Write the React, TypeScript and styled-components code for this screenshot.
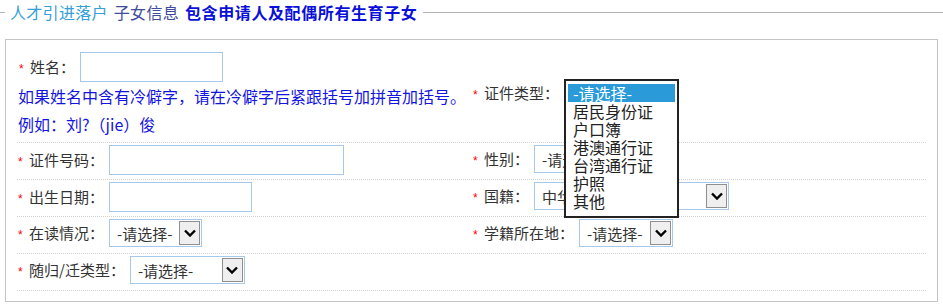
import styled, { createGlobalStyle } from 'styled-components'

const GlobalStyle = createGlobalStyle`
  html, body {
    margin: 0;
    padding: 0;
    background: #ffffff;
  }
  body {
    font-family: 'Noto Sans CJK SC', 'Liberation Sans', sans-serif;
    color: #333333;
  }
`

const Page = styled.div`
  width: 943px;
  height: 305px;
  overflow: hidden;
`

const Legend = styled.div`
  display: flex;
  align-items: center;
  height: 24px;
  font-size: 16px;
  line-height: 24px;
  white-space: nowrap;

  &::before,
  &::after {
    content: '';
    height: 1px;
    background: #b4b4b4;
  }

  &::before {
    width: 5px;
    margin-right: 5px;
  }

  &::after {
    flex: 1;
    margin-left: 6px;
  }
`

const LegendPart = styled.span<{ $tone: 'light' | 'slate' | 'strong' }>`
  color: ${(p) =>
    p.$tone === 'light' ? '#35a0d8' : p.$tone === 'slate' ? '#3e4c9c' : '#0a10d8'};
  font-weight: ${(p) => (p.$tone === 'strong' ? 'bold' : 'normal')};
  letter-spacing: ${(p) => (p.$tone === 'strong' ? '0.6px' : '0.3px')};
  margin-right: ${(p) => (p.$tone === 'strong' ? '0' : '6px')};
`

const Box = styled.div`
  margin: 15px 0 0 5px;
  width: 933px;
  height: 263px;
  box-sizing: border-box;
  border: 1px solid #c4c4c4;
  padding: 9px 11px 0 11px;
`

const Row = styled.div<{ $first?: boolean }>`
  display: grid;
  grid-template-columns: 455px 1fr;
  box-sizing: border-box;
  height: ${(p) => (p.$first ? '94px' : '37px')};
  padding-top: ${(p) => (p.$first ? '3px' : '2px')};
  border-bottom: 1px dotted #d2d2d2;
  align-items: start;
`

const Cell = styled.div<{ $center?: boolean }>`
  display: flex;
  align-items: center;
  align-self: ${(p) => (p.$center ? 'center' : 'start')};
  margin-bottom: ${(p) => (p.$center ? '8px' : '0')};
  padding-left: 1px;
`

const Stack = styled.div`
  display: flex;
  flex-direction: column;
  padding-left: 1px;
`

const Star = styled.span`
  color: #ff0000;
  font-size: 12px;
  width: 7px;
  margin-right: 4px;
  font-family: 'Liberation Sans', sans-serif;
  line-height: 12px;
  position: relative;
  top: 2px;
`

const Label = styled.span`
  font-size: 15px;
  color: #333333;
  line-height: 20px;
  margin-right: 5px;
  white-space: nowrap;
`

const TextInput = styled.div<{ $w: number }>`
  width: ${(p) => p.$w}px;
  height: 30px;
  box-sizing: border-box;
  border: 1px solid #a6c8ea;
  background: #ffffff;
`

const Help = styled.div`
  color: #1414e0;
  font-size: 16px;
  line-height: 28px;
  white-space: nowrap;
`

const SelectBox = styled.div<{ $w: number }>`
  position: relative;
  width: ${(p) => p.$w}px;
  height: 28px;
  box-sizing: border-box;
  border: 1px solid #a6c8ea;
  background: #ffffff;
  display: flex;
  align-items: center;
`

const SelectText = styled.span`
  flex: 1;
  padding-left: 7px;
  font-size: 15px;
  color: #333333;
  white-space: nowrap;
  overflow: hidden;
`

const ArrowButton = styled.span`
  width: 21px;
  height: 24px;
  margin-right: 1px;
  box-sizing: border-box;
  border: 1px solid #8f8f8f;
  background: #efefef;
  display: flex;
  align-items: center;
  justify-content: center;
`

const OpenList = styled.ul`
  position: absolute;
  left: -1px;
  top: -1px;
  width: 115px;
  box-sizing: border-box;
  margin: 0;
  padding: 3px 2px 6px;
  list-style: none;
  border: 2px solid #222222;
  background: #ffffff;
  z-index: 5;
`

const Option = styled.li<{ $active?: boolean }>`
  height: 18px;
  line-height: 18px;
  font-size: 16px;
  padding-left: 5px;
  color: ${(p) => (p.$active ? '#ffffff' : '#222222')};
  background: ${(p) => (p.$active ? '#2a9ad8' : 'transparent')};
  white-space: nowrap;
`

const Chevron = () => (
  <svg width='12' height='8' viewBox='0 0 12 8'>
    <path d='M1 1.5 L6 6.5 L11 1.5' fill='none' stroke='#000' strokeWidth='2.4' />
  </svg>
)

const Select = ({ w, text }: { w: number; text: string }) => (
  <SelectBox $w={w}>
    <SelectText>{text}</SelectText>
    <ArrowButton>
      <Chevron />
    </ArrowButton>
  </SelectBox>
)

const docTypes = ['-请选择-', '居民身份证', '户口簿', '港澳通行证', '台湾通行证', '护照', '其他']

const Field = ({ label, children }: { label: string; children: React.ReactNode }) => (
  <Cell>
    <Star>*</Star>
    <Label>{label}</Label>
    {children}
  </Cell>
)

export default function App() {
  return (
    <Page>
      <GlobalStyle />
      <Legend>
        <LegendPart $tone='light'>人才引进落户</LegendPart>
        <LegendPart $tone='slate'>子女信息</LegendPart>
        <LegendPart $tone='strong'>包含申请人及配偶所有生育子女</LegendPart>
      </Legend>
      <Box>
        <Row $first>
          <Stack>
            <Field label='姓名：'>
              <TextInput $w={143} />
            </Field>
            <Help>如果姓名中含有冷僻字，请在冷僻字后紧跟括号加拼音加括号。</Help>
            <Help>例如：刘?（jie）俊</Help>
          </Stack>
          <Cell $center>
            <Star>*</Star>
            <Label>证件类型：</Label>
            <SelectBox $w={112}>
              <SelectText>-请选择-</SelectText>
              <OpenList>
                {docTypes.map((t, i) => (
                  <Option key={t} $active={i === 0}>
                    {t}
                  </Option>
                ))}
              </OpenList>
            </SelectBox>
          </Cell>
        </Row>
        <Row>
          <Field label='证件号码：'>
            <TextInput $w={235} />
          </Field>
          <Field label='性别：'>
            <Select w={93} text='-请选择-' />
          </Field>
        </Row>
        <Row>
          <Field label='出生日期：'>
            <TextInput $w={143} />
          </Field>
          <Field label='国籍：'>
            <Select w={195} text='中华人民共和国' />
          </Field>
        </Row>
        <Row>
          <Field label='在读情况：'>
            <Select w={93} text='-请选择-' />
          </Field>
          <Field label='学籍所在地：'>
            <Select w={94} text='-请选择-' />
          </Field>
        </Row>
        <Row>
          <Field label='随归/迁类型：'>
            <Select w={115} text='-请选择-' />
          </Field>
          <div />
        </Row>
      </Box>
    </Page>
  )
}
